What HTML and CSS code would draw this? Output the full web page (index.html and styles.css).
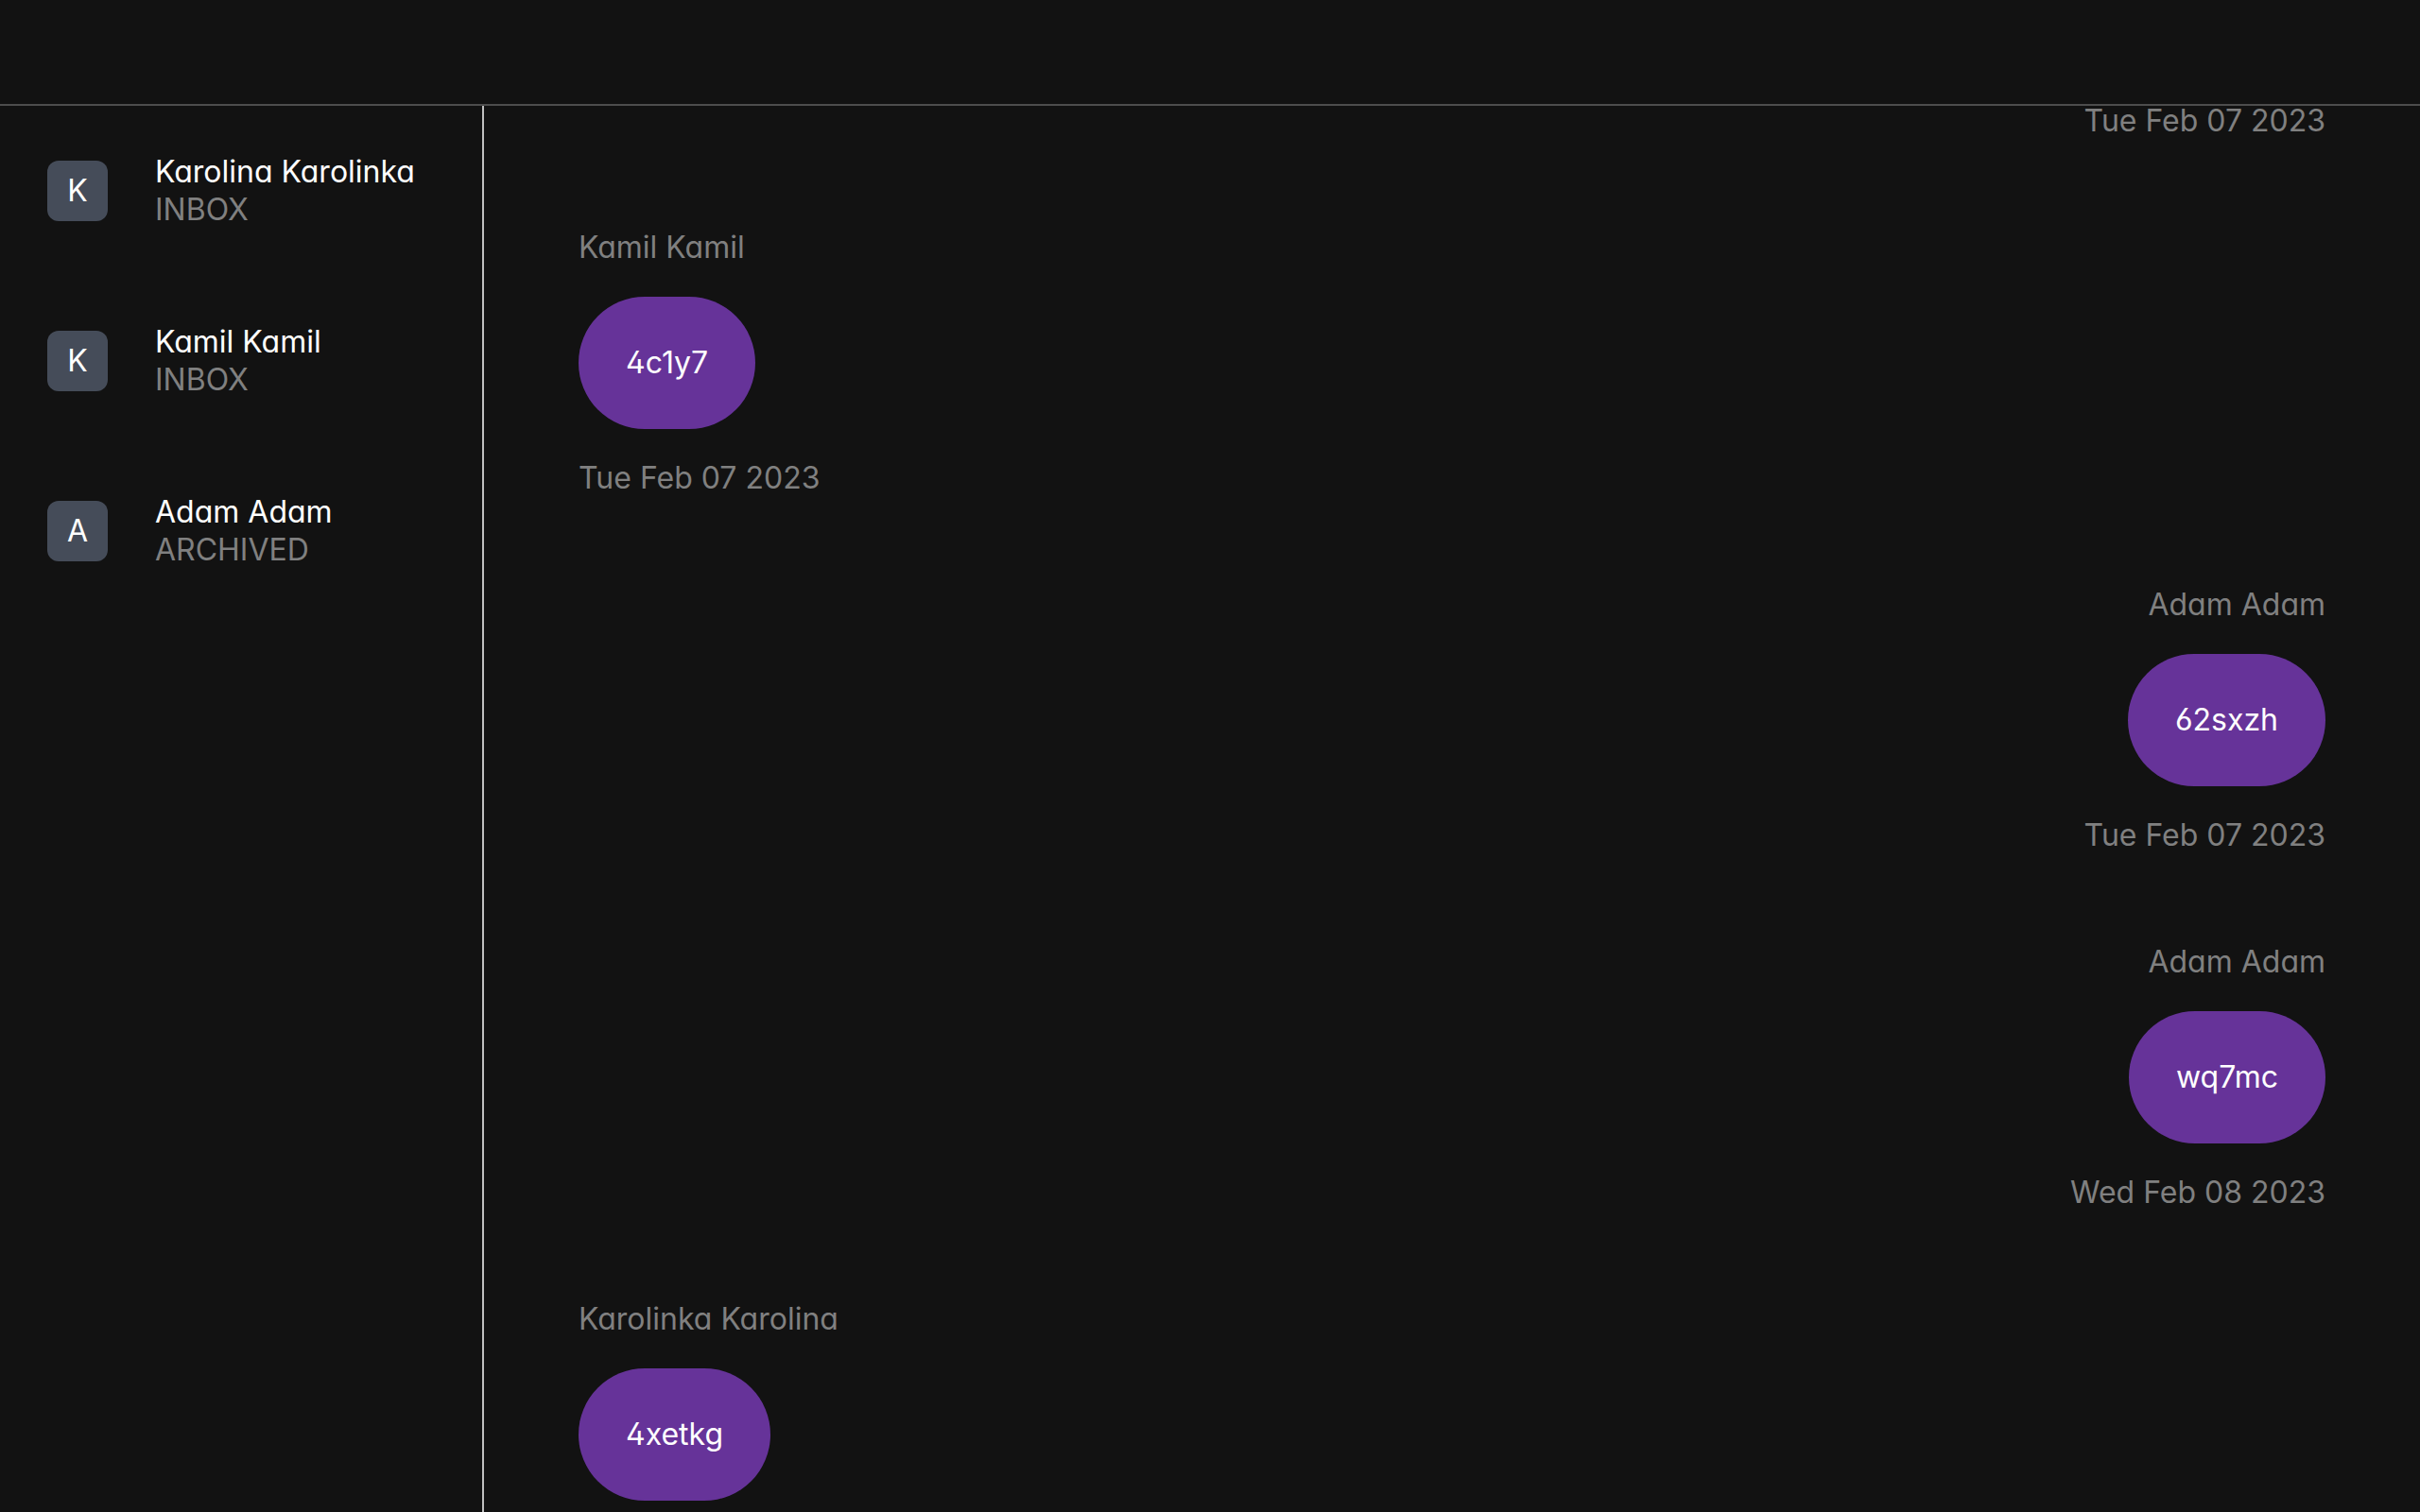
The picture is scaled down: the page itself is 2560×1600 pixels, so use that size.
FILE: index.html
```html
<!DOCTYPE html>
<html lang="en">
<head>
<meta charset="utf-8">
<meta name="viewport" content="width=device-width, initial-scale=1">
<title>Messages</title>
<link rel="stylesheet" href="styles.css">
</head>
<body>
<header class="topbar"></header>
<div class="layout">
  <aside class="sidebar">
    <ul class="contacts">
      <li class="contact">
        <span class="avatar">K</span>
        <div class="contact-text">
          <span class="contact-name">Karolina Karolinka</span>
          <span class="contact-status">INBOX</span>
        </div>
      </li>
      <li class="contact">
        <span class="avatar">K</span>
        <div class="contact-text">
          <span class="contact-name">Kamil Kamil</span>
          <span class="contact-status">INBOX</span>
        </div>
      </li>
      <li class="contact">
        <span class="avatar">A</span>
        <div class="contact-text">
          <span class="contact-name">Adam Adam</span>
          <span class="contact-status">ARCHIVED</span>
        </div>
      </li>
    </ul>
  </aside>
  <main class="chat">
    <ol class="messages">
      <li class="message own">
        <time class="meta" datetime="2023-02-07">Tue Feb 07 2023</time>
      </li>
      <li class="message">
        <span class="meta">Kamil Kamil</span>
        <p class="bubble">4c1y7</p>
        <time class="meta" datetime="2023-02-07">Tue Feb 07 2023</time>
      </li>
      <li class="message own">
        <span class="meta">Adam Adam</span>
        <p class="bubble">62sxzh</p>
        <time class="meta" datetime="2023-02-07">Tue Feb 07 2023</time>
      </li>
      <li class="message own">
        <span class="meta">Adam Adam</span>
        <p class="bubble">wq7mc</p>
        <time class="meta" datetime="2023-02-08">Wed Feb 08 2023</time>
      </li>
      <li class="message">
        <span class="meta">Karolinka Karolina</span>
        <p class="bubble">4xetkg</p>
      </li>
    </ol>
  </main>
</div>
</body>
</html>
```
FILE: styles.css
```css
* {
  box-sizing: border-box;
  margin: 0;
  padding: 0;
}

body {
  display: flex;
  flex-direction: column;
  height: 100vh;
  overflow: hidden;
  background: #121212;
  color: #fff;
  font-family: Inter, "Liberation Sans", sans-serif;
  font-size: 32px;
  line-height: 40px;
  font-feature-settings: "cv02", "cv03", "cv04", "cv11";
}

ul,
ol {
  list-style: none;
}

.topbar {
  flex: none;
  height: 112px;
  border-bottom: 2px solid #4d4d4d;
}

.layout {
  display: grid;
  grid-template-columns: 20% 1fr;
  flex: 1;
  min-height: 0;
}

.sidebar {
  border-right: 2px solid #c0c0c0;
}

.contact {
  display: flex;
  align-items: center;
  gap: 50px;
  padding: 50px;
}

.avatar {
  display: flex;
  align-items: center;
  justify-content: center;
  flex: none;
  width: 64px;
  height: 64px;
  border-radius: 12px;
  background: #454c59;
}

.contact-text {
  display: flex;
  flex-direction: column;
  white-space: nowrap;
}

.contact-status,
.meta {
  color: #808080;
}

.chat {
  padding: 0 100px;
}

/* The list sits slightly scrolled under the top bar. */
.messages {
  display: flex;
  flex-direction: column;
  gap: 94px;
  margin-top: -4px;
}

.message {
  display: flex;
  flex-direction: column;
  align-items: flex-start;
  gap: 32px;
}

.own {
  align-items: flex-end;
}

.bubble {
  padding: 50px;
  border-radius: 70px;
  background: #663399;
}
```
